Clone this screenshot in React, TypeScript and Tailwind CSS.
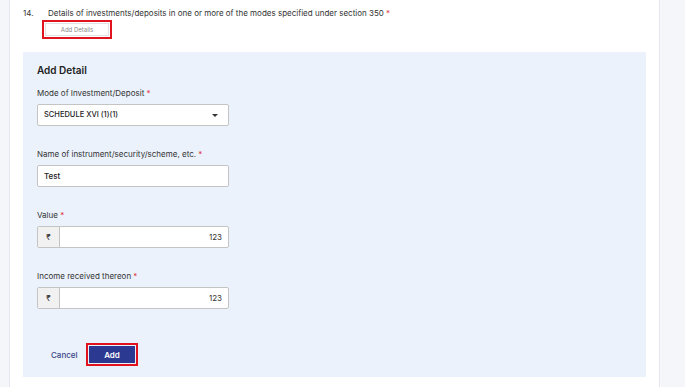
// Form section: "Add Detail" panel for investments/deposits (section 350).
const fontStack = { fontFamily: "Inter, 'Liberation Sans', sans-serif" };

function Label({ text }: { text: string }) {
  return (
    <div className="text-[8px] leading-[11px] text-[#333] mb-[5px]">
      {text} <span className="text-[#e0343c]">*</span>
    </div>
  );
}

function RupeeInput({ value }: { value: string }) {
  return (
    <div className="flex w-[192px] h-[22px] border border-[#c4c4c4] rounded-[2px] bg-white overflow-hidden">
      <div className="w-[22px] flex items-center justify-center bg-[#f1f1f1] border-r border-[#c4c4c4] text-[8px] text-[#333]">
        ₹
      </div>
      <div className="flex-1 flex items-center justify-end pr-[6px] text-[8px] text-[#333]">{value}</div>
    </div>
  );
}

export default function App() {
  return (
    <div className="w-[685px] h-[387px] flex bg-[#f5f6fa] overflow-hidden" style={fontStack}>
      <div className="w-[10px] border-r border-[#e6e7ee]" />
      <div className="w-[649px] bg-white px-[13px] flex flex-col">
        {/* Question header */}
        <div className="flex items-start pt-[8px] text-[8px] leading-[11px] text-[#333]">
          <span className="w-[25px]">14.</span>
          <span>
            Details of investments/deposits in one or more of the modes specified under section 350{" "}
            <span className="text-[#e0343c]">*</span>
          </span>
        </div>
        <div className="ml-[19px] mt-[1px] w-[70px] h-[19px] border-2 border-[#e0141e] p-[1px]">
          <div className="h-full bg-white border border-[#e2e2e2] flex items-center justify-center text-[6px] text-[#8a8a8a]">
            Add Details
          </div>
        </div>

        {/* Add Detail panel */}
        <div className="mt-[13px] h-[325px] bg-[#ebf2fc] pt-[11px] px-[14px] flex flex-col">
          <div className="text-[10px] leading-[14px] font-semibold text-[#222]">Add Detail</div>

          <div className="mt-[11px]">
            <Label text="Mode of Investment/Deposit" />
            <div className="w-[192px] h-[22px] border border-[#c4c4c4] rounded-[2px] bg-white flex items-center justify-between pl-[6px] pr-[10px]">
              <span className="text-[7.5px] font-medium text-[#222]">SCHEDULE XVI (1)(1)</span>
              <svg width="6" height="3" viewBox="0 0 6 3">
                <path d="M0 0h6L3 3z" fill="#333" />
              </svg>
            </div>
          </div>

          <div className="mt-[23px]">
            <Label text="Name of instrument/security/scheme, etc." />
            <div className="w-[192px] h-[22px] border border-[#c4c4c4] rounded-[2px] bg-white flex items-center pl-[6px] text-[8px] font-medium text-[#222]">
              Test
            </div>
          </div>

          <div className="mt-[23px]">
            <Label text="Value" />
            <RupeeInput value="123" />
          </div>

          <div className="mt-[23px]">
            <Label text="Income received thereon" />
            <RupeeInput value="123" />
          </div>

          <div className="mt-[34px] flex items-center">
            <span className="ml-[14px] w-[35px] text-[8px] font-medium text-[#3a4785]">Cancel</span>
            <div className="w-[52px] h-[23px] border-2 border-[#e0141e] p-[1px]">
              <div className="h-full bg-[#2b3990] flex items-center justify-center text-[8px] font-semibold text-white">
                Add
              </div>
            </div>
          </div>
        </div>
      </div>
      <div className="flex-1 border-l border-[#e6e7ee]" />
    </div>
  );
}
